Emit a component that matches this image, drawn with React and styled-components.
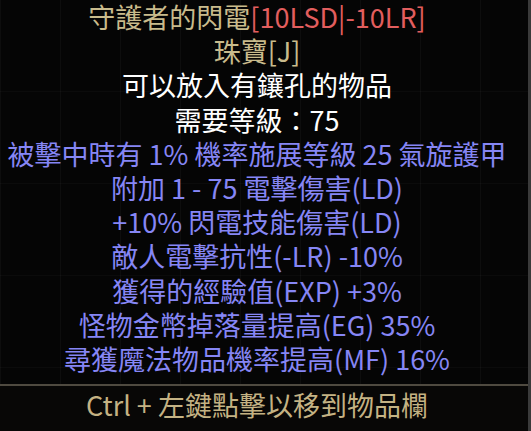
import React from "react";
import styled, { createGlobalStyle } from "styled-components";

const GlobalStyle = createGlobalStyle`
  html, body {
    margin: 0;
    padding: 0;
    background: #050505;
  }
  body {
    font-family: "Noto Sans CJK TC", "Noto Sans", sans-serif;
  }
`;

const stats = [
  "被擊中時有 1% 機率施展等級 25 氣旋護甲",
  "附加 1 - 75 電擊傷害(LD)",
  "+10% 閃電技能傷害(LD)",
  "敵人電擊抗性(-LR) -10%",
  "獲得的經驗值(EXP) +3%",
  "怪物金幣掉落量提高(EG) 35%",
  "尋獲魔法物品機率提高(MF) 16%",
];

function App() {
  return (
    <>
      <GlobalStyle />
      <Tooltip>
        <Body>
          <Line color="#c9bb8c">
            守護者的閃電<Tag>[10LSD|-10LR]</Tag>
          </Line>
          <Line color="#c9bb8c">珠寶[J]</Line>
          <Line color="#ffffff">可以放入有鑲孔的物品</Line>
          <Line color="#ffffff">需要等級：75</Line>
          {stats.map((s) => (
            <Line key={s} color="#8686f5">
              {s}
            </Line>
          ))}
        </Body>
        <Footer>
          <Line color="#c4b283">Ctrl + 左鍵點擊以移到物品欄</Line>
        </Footer>
      </Tooltip>
    </>
  );
}

export default App;

const Tooltip = styled.div`
  width: 531px;
  height: 431px;
  box-sizing: border-box;
  display: flex;
  flex-direction: column;
  background-color: #050505;
  background-image: linear-gradient(90deg, rgba(255, 255, 255, 0.03) 1px, transparent 1px),
    linear-gradient(0deg, rgba(255, 255, 255, 0.025) 1px, transparent 1px);
  background-size: 60px 92px;
  border-right: 3px solid #3a3a3a;
  overflow: hidden;
`;

const Body = styled.div`
  display: flex;
  flex-direction: column;
  align-items: center;
  padding-right: 14px;
`;

const Line = styled.div`
  color: ${(props) => props.color};
  font-size: 27px;
  line-height: 34.2px;
  white-space: nowrap;
  text-align: center;
`;

const Tag = styled.span`
  color: #e25e5e;
`;

const Footer = styled.div`
  margin-top: 8px;
  border-top: 2px solid #4f4a40;
  display: flex;
  justify-content: center;
  padding: 2px 14px 0 0;
  flex: 1;
  background: #080706;
`;
